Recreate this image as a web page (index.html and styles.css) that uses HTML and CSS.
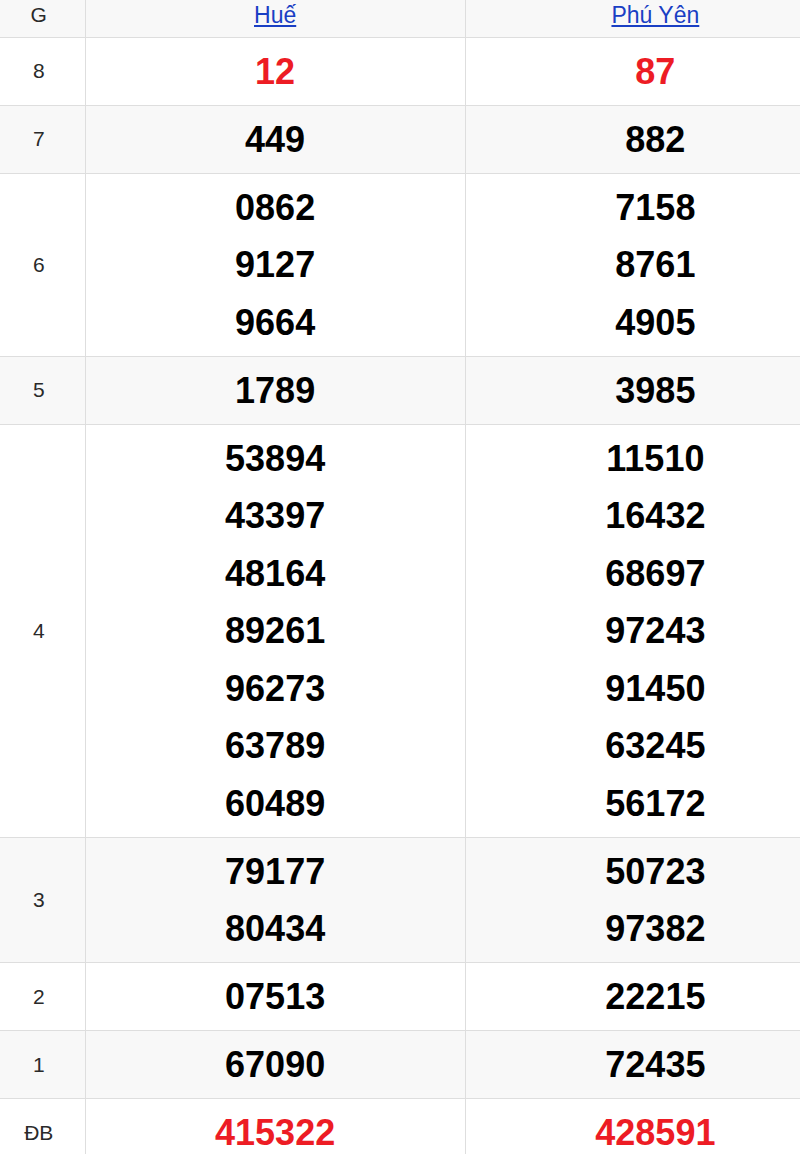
FILE: index.html
```html
<!DOCTYPE html>
<html lang="vi">
<head>
<meta charset="utf-8">
<link rel="stylesheet" href="styles.css">
</head>
<body>
<div class="wrap">
<table class="kq">
  <thead>
    <tr class="alt">
      <th class="g">G</th>
      <th><a href="#">Huế</a></th>
      <th><a href="#">Phú Yên</a></th>
    </tr>
  </thead>
  <tbody>
    <tr>
      <td class="g">8</td>
      <td class="red"><div>12</div></td>
      <td class="red"><div>87</div></td>
    </tr>
    <tr class="alt">
      <td class="g">7</td>
      <td><div>449</div></td>
      <td><div>882</div></td>
    </tr>
    <tr>
      <td class="g">6</td>
      <td><div>0862</div><div>9127</div><div>9664</div></td>
      <td><div>7158</div><div>8761</div><div>4905</div></td>
    </tr>
    <tr class="alt">
      <td class="g">5</td>
      <td><div>1789</div></td>
      <td><div>3985</div></td>
    </tr>
    <tr>
      <td class="g">4</td>
      <td><div>53894</div><div>43397</div><div>48164</div><div>89261</div><div>96273</div><div>63789</div><div>60489</div></td>
      <td><div>11510</div><div>16432</div><div>68697</div><div>97243</div><div>91450</div><div>63245</div><div>56172</div></td>
    </tr>
    <tr class="alt">
      <td class="g">3</td>
      <td><div>79177</div><div>80434</div></td>
      <td><div>50723</div><div>97382</div></td>
    </tr>
    <tr>
      <td class="g">2</td>
      <td><div>07513</div></td>
      <td><div>22215</div></td>
    </tr>
    <tr class="alt">
      <td class="g">1</td>
      <td><div>67090</div></td>
      <td><div>72435</div></td>
    </tr>
    <tr>
      <td class="g">ĐB</td>
      <td class="red"><div>415322</div></td>
      <td class="red"><div>428591</div></td>
    </tr>
  </tbody>
</table>
</div>
</body>
</html>
```

FILE: styles.css
```css
html, body {
  margin: 0;
  padding: 0;
  background: #fff;
}

body {
  font-family: "Liberation Sans", Arial, sans-serif;
  color: #000;
}

.wrap {
  width: 100%;
  overflow: hidden;
}

.kq {
  border-collapse: collapse;
  table-layout: fixed;
  width: 846px;
}

.kq th,
.kq td {
  border: 1px solid #dedede;
  text-align: center;
  vertical-align: middle;
  padding: 0;
}

.kq tr > :first-child {
  border-left: none;
}

.kq thead tr > * {
  border-top: none;
}

.kq th {
  height: 37px;
  padding-bottom: 6px;
  box-sizing: border-box;
  font-weight: normal;
  font-size: 23px;
  line-height: 28px;
}

.kq th.g,
.kq td.g {
  width: 85px;
  padding-right: 7px;
  box-sizing: border-box;
  font-size: 21px;
  font-weight: normal;
  color: #2a2a2a;
}

.kq th a {
  color: #1a3fc4;
  text-decoration: underline;
}

.kq td {
  padding-top: 5px;
  padding-bottom: 4.5px;
  font-size: 36px;
  font-weight: bold;
  line-height: 57.5px;
}

.kq td.g {
  line-height: 28px;
}

.kq tr.alt {
  background: #f8f8f8;
}

.kq td.red {
  color: #ed1c24;
}
```
